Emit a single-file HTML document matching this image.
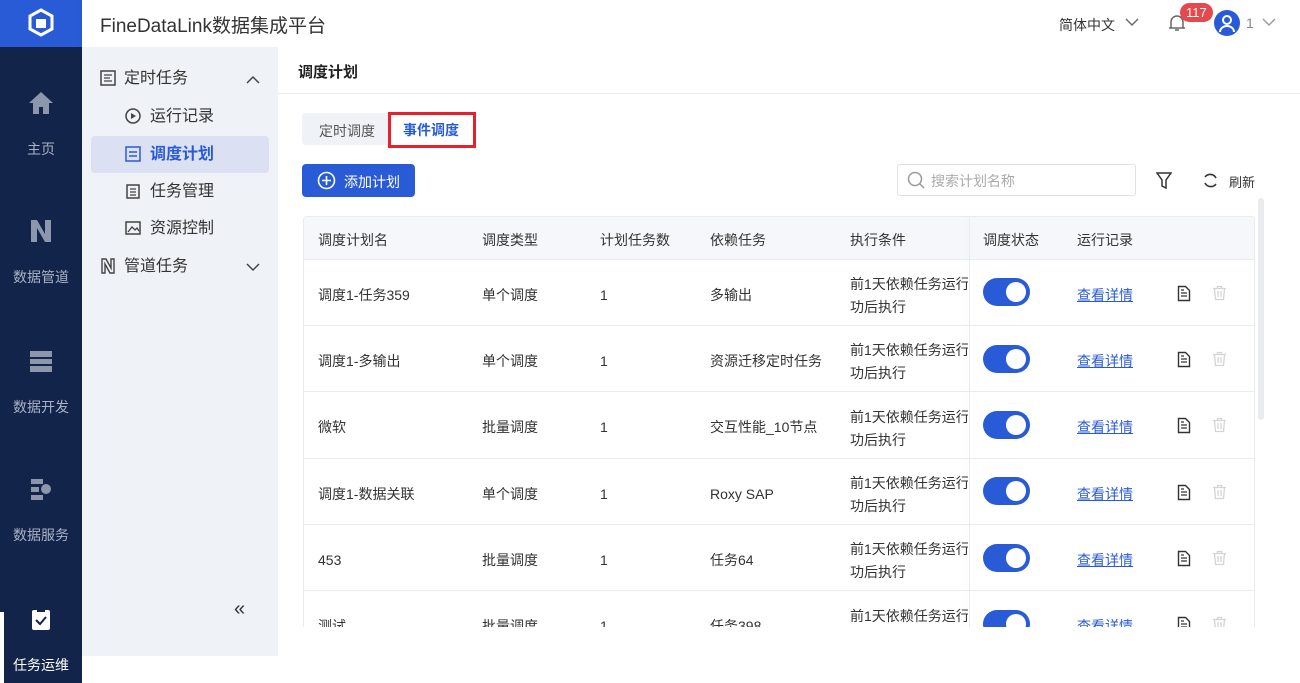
<!DOCTYPE html>
<html><head><meta charset="utf-8"><style>
*{margin:0;padding:0;box-sizing:border-box}
body{width:1300px;height:683px;overflow:hidden;background:#fff;font-family:"Liberation Sans","Noto Sans CJK SC",sans-serif;position:relative;color:#333}
.abs{position:absolute}
.side{left:0;top:0;width:82px;height:683px;background:#13244a}
.logo{left:0;top:0;width:82px;height:47px;background:#2a5bd7}
.nav{width:82px;text-align:center;color:#a9b2c4;font-size:14px}
.nav div{margin-top:20px}
.top{left:82px;top:0;width:1218px;height:47px;background:#fff;box-shadow:0 2px 6px rgba(0,0,0,.06)}
.menu{left:82px;top:47px;width:196px;height:609px;background:#eff2f7}
.mi{position:absolute;font-size:16px;color:#333;line-height:20px}
.mic{position:absolute}
.main{left:278px;top:47px;width:1022px;height:580px;background:#fff;overflow:hidden}
.tbl{position:absolute;left:25px;top:169px;width:952px;height:420px;border:1px solid #e8ebf0;border-radius:4px;overflow:hidden}
.th{position:absolute;top:0;left:0;width:952px;height:43px;background:#f5f7fa;border-bottom:1px solid #e8ebf0}
.c{position:absolute;font-size:14px;color:#333;white-space:nowrap;line-height:20px}
.row{position:absolute;left:0;width:952px;height:66px;border-bottom:1px solid #e8ebf0}
.tg{position:absolute;width:47px;height:28px;border-radius:14px;background:#2a5bd7}
.tg:after{content:"";position:absolute;right:4px;top:4px;width:20px;height:20px;border-radius:50%;background:#fff}
.lk{color:#2a5bd7;text-decoration:underline}
.b{position:absolute;top:2px;left:0;width:952px;height:411px}
</style></head><body>
<div class="abs side"></div>
<div class="abs logo"><svg width="82" height="47"><g transform="translate(41,23)" fill="#fff"><path d="M0-13 L11-7 L11 6 L0 12 L-11 6 L-11-7Z" fill="none" stroke="#fff" stroke-width="3"/><path d="M-5-4h10v9h-10z"/></g></svg></div>
<div class="abs nav" style="top:90px"><svg width="26" height="26" viewBox="0 0 26 26"><path d="M13 2 L25 13 H21 V24 H15 V17 H11 V24 H5 V13 H1Z" fill="#8d97ab"/></svg><div>主页</div></div>
<div class="abs nav" style="top:218px"><svg width="26" height="26"><path d="M3 2h6l8 14V2h6v22h-6L9 10v14H3z" fill="#8d97ab"/></svg><div>数据管道</div></div>
<div class="abs nav" style="top:348px"><svg width="26" height="26"><rect x="2" y="3" width="22" height="6" fill="#8d97ab"/><rect x="2" y="11" width="22" height="5" fill="#8d97ab"/><rect x="2" y="18" width="22" height="6" fill="#8d97ab"/></svg><div>数据开发</div></div>
<div class="abs nav" style="top:476px"><svg width="26" height="26"><rect x="3" y="3" width="12" height="5" fill="#8d97ab"/><rect x="3" y="11" width="8" height="5" fill="#8d97ab"/><rect x="3" y="19" width="12" height="5" fill="#8d97ab"/><circle cx="18" cy="13" r="5" fill="#8d97ab"/></svg><div>数据服务</div></div>
<div class="abs" style="left:0;top:612px;width:4px;height:71px;background:#fff"></div>
<div class="abs nav" style="top:606px;color:#fff"><svg width="26" height="26"><rect x="4" y="4" width="18" height="20" rx="2" fill="#fff"/><rect x="9" y="2" width="8" height="4" fill="#13244a"/><path d="M8 14l4 4 6-7" stroke="#13244a" stroke-width="2" fill="none"/></svg><div>任务运维</div></div>
<div class="abs top"><div class="abs" style="left:18px;top:11px;font-size:19px;color:#333">FineDataLink数据集成平台</div>
<div class="abs" style="left:977px;top:15px;font-size:14px;color:#333">简体中文</div>
<svg class="abs" style="left:1043px;top:17px" width="14" height="10"><path d="M1 2l6 6 6-6" stroke="#666" stroke-width="1.4" fill="none"/></svg>
<svg class="abs" style="left:1086px;top:13px" width="18" height="20"><path d="M3 15V9a6 6 0 0 1 12 0v6h2H1zM7 17h4" stroke="#666" stroke-width="1.5" fill="none"/></svg>
<div class="abs" style="left:1098px;top:3px;background:#e5484d;color:#fff;font-size:13px;border-radius:10px;padding:0 6px;height:19px;line-height:19px">117</div>
<div class="abs" style="left:1132px;top:10px;width:26px;height:26px;border-radius:50%;background:#2a5bd7"><svg width="26" height="26"><circle cx="13" cy="10" r="4" stroke="#fff" stroke-width="2" fill="none"/><path d="M6 22a7 6 0 0 1 14 0" stroke="#fff" stroke-width="2" fill="none"/></svg></div>
<div class="abs" style="left:1164px;top:15px;font-size:14px;color:#888">1</div>
<svg class="abs" style="left:1180px;top:17px" width="14" height="10"><path d="M1 2l6 6 6-6" stroke="#999" stroke-width="1.4" fill="none"/></svg></div>
<div class="abs menu">
<svg class="mic" style="left:18px;top:23px" width="16" height="16"><rect x="1" y="1" width="14" height="14" fill="none" stroke="#444" stroke-width="1.5"/><path d="M4 5h8M4 8h6M4 11h8" stroke="#444" stroke-width="1.3"/></svg>
<div class="mi" style="left:42px;top:22px">定时任务</div>
<svg class="mic" style="left:164px;top:28px" width="14" height="10"><path d="M1 8l6-6 6 6" stroke="#444" stroke-width="1.5" fill="none"/></svg>
<svg class="mic" style="left:43px;top:61px" width="16" height="16"><circle cx="8" cy="8" r="7" fill="none" stroke="#444" stroke-width="1.5"/><path d="M6 5l5 3-5 3z" fill="#444"/></svg>
<div class="mi" style="left:68px;top:60px">运行记录</div>
<div class="abs" style="left:9px;top:89px;width:178px;height:37px;background:#dbe1f3;border-radius:4px"></div>
<svg class="mic" style="left:43px;top:99px" width="16" height="16"><rect x="1" y="1" width="14" height="14" fill="none" stroke="#2a5bd7" stroke-width="1.5"/><path d="M4 6h8M4 10h8" stroke="#2a5bd7" stroke-width="1.5"/></svg>
<div class="mi" style="left:68px;top:98px;color:#2a5bd7;font-weight:bold">调度计划</div>
<svg class="mic" style="left:43px;top:136px" width="16" height="16"><rect x="2" y="2" width="12" height="13" fill="none" stroke="#444" stroke-width="1.5"/><path d="M5 6h6M5 9h6M5 12h6" stroke="#444" stroke-width="1.3"/></svg>
<div class="mi" style="left:68px;top:135px">任务管理</div>
<svg class="mic" style="left:43px;top:173px" width="16" height="16"><rect x="1" y="2" width="14" height="12" fill="none" stroke="#444" stroke-width="1.5"/><path d="M3 12l4-5 3 3 2-2 2 3" stroke="#444" stroke-width="1.3" fill="none"/></svg>
<div class="mi" style="left:68px;top:172px">资源控制</div>
<svg class="mic" style="left:18px;top:211px" width="16" height="16"><path d="M2 1h4l5 9V1h3v14h-4L5 6v9H2z" fill="none" stroke="#444" stroke-width="1.4"/></svg>
<div class="mi" style="left:42px;top:210px">管道任务</div>
<svg class="mic" style="left:164px;top:215px" width="14" height="10"><path d="M1 2l6 6 6-6" stroke="#444" stroke-width="1.5" fill="none"/></svg>
<div class="mi" style="left:152px;top:552px;font-size:20px">«</div>
</div>
<div class="abs main">
<div class="abs" style="left:20px;top:14px;font-size:15px;font-weight:bold;color:#222">调度计划</div>
<div class="abs" style="left:0;top:46px;width:1022px;height:1px;background:#e8ebf0"></div>
<div class="abs" style="left:24px;top:66px;width:162px;height:32px;background:#eff2f7;border-radius:4px"></div>
<div class="abs" style="left:41px;top:74px;font-size:14px;color:#555">定时调度</div>
<div class="abs" style="left:110px;top:65px;width:88px;height:36px;border:3px solid #e8202a;background:#fff"></div>
<div class="abs" style="left:125px;top:73px;font-size:14px;color:#2a5bd7;font-weight:bold">事件调度</div>
<div class="abs" style="left:24px;top:117px;width:113px;height:33px;background:#2a5bd7;border-radius:4px"></div>
<svg class="abs" style="left:39px;top:124px" width="19" height="19"><circle cx="9.5" cy="9.5" r="8" fill="none" stroke="#fff" stroke-width="1.6"/><path d="M9.5 5v9M5 9.5h9" stroke="#fff" stroke-width="1.6"/></svg>
<div class="abs" style="left:66px;top:125px;color:#fff;font-size:14px">添加计划</div>
<div class="abs" style="left:619px;top:117px;width:239px;height:32px;border:1px solid #dde1e8;border-radius:3px"></div>
<svg class="abs" style="left:629px;top:124px" width="19" height="19"><circle cx="8" cy="8" r="6.5" fill="none" stroke="#999" stroke-width="1.5"/><path d="M13 13l4 4" stroke="#999" stroke-width="1.5"/></svg>
<div class="abs" style="left:653px;top:124px;font-size:14px;color:#aaa">搜索计划名称</div>
<svg class="abs" style="left:878px;top:125px" width="16" height="17"><path d="M1 1h14l-5 7v8l-4-2V8z" fill="none" stroke="#333" stroke-width="1.5"/></svg>
<svg class="abs" style="left:924px;top:125px" width="17" height="17"><path d="M14 6A6.5 6.5 0 0 0 3 5M3 11a6.5 6.5 0 0 0 11 1" fill="none" stroke="#333" stroke-width="1.6"/></svg>
<div class="abs" style="left:951px;top:125px;font-size:13px;color:#333">刷新</div>
<div class="abs" style="left:980px;top:151px;width:6px;height:222px;background:#e9ebef;border-radius:3px"></div>
<div class="tbl">
<div class="th">
<div class="c" style="left:14px;top:13px">调度计划名</div><div class="c" style="left:178px;top:13px">调度类型</div><div class="c" style="left:296px;top:13px">计划任务数</div><div class="c" style="left:406px;top:13px">依赖任务</div><div class="c" style="left:546px;top:13px">执行条件</div><div class="c" style="left:679px;top:13px">调度状态</div><div class="c" style="left:773px;top:13px">运行记录</div></div>
<div class="row" style="top:43px"></div><div class="row" style="top:109px"></div><div class="row" style="top:176px"></div><div class="row" style="top:242px"></div><div class="row" style="top:308px"></div><div class="row" style="top:375px"></div>
<div class="abs" style="left:665px;top:0;width:1px;height:420px;background:#e8ebf0;box-shadow:-3px 0 6px rgba(0,0,0,.06)"></div>
</div>
</div>
<svg width="0" height="0" style="position:absolute"><defs>
<g id="doc"><path d="M1.5 1.5h7l4 4v10h-11z" fill="none" stroke="#333" stroke-width="1.4"/><path d="M4 8h6M4 11h6M4 5h3" stroke="#333" stroke-width="1.2"/></g>
<g id="tr"><path d="M1 3.5h13M5.5 3.5V1.5h4v2M2.5 3.5l1 11h8l1-11M6 6v6M9 6v6" fill="none" stroke="#d4d4d4" stroke-width="1.3"/></g>
</defs></svg>
<div class="abs" style="left:303px;top:216px;width:952px;height:411px;overflow:hidden">
<div class="b">
<div class="c" style="left:15px;top:67px">调度1-任务359</div><div class="c" style="left:179px;top:67px">单个调度</div><div class="c" style="left:297px;top:67px">1</div><div class="c" style="left:407px;top:67px">多输出</div><div class="c" style="left:547px;top:55px;line-height:23px;width:118px;overflow:hidden">前1天依赖任务运行<br>功后执行</div><div class="tg" style="left:680px;top:60px"></div><div class="c lk" style="left:774px;top:67px">查看详情</div><svg class="abs" style="left:874px;top:67px" width="15" height="17"><use href="#doc"/></svg><svg class="abs" style="left:909px;top:67px" width="15" height="17"><use href="#tr"/></svg>
<div class="c" style="left:15px;top:133px">调度1-多输出</div><div class="c" style="left:179px;top:133px">单个调度</div><div class="c" style="left:297px;top:133px">1</div><div class="c" style="left:407px;top:133px">资源迁移定时任务</div><div class="c" style="left:547px;top:121px;line-height:23px;width:118px;overflow:hidden">前1天依赖任务运行<br>功后执行</div><div class="tg" style="left:680px;top:127px"></div><div class="c lk" style="left:774px;top:133px">查看详情</div><svg class="abs" style="left:874px;top:133px" width="15" height="17"><use href="#doc"/></svg><svg class="abs" style="left:909px;top:133px" width="15" height="17"><use href="#tr"/></svg>
<div class="c" style="left:15px;top:199px">微软</div><div class="c" style="left:179px;top:199px">批量调度</div><div class="c" style="left:297px;top:199px">1</div><div class="c" style="left:407px;top:199px">交互性能_10节点</div><div class="c" style="left:547px;top:188px;line-height:23px;width:118px;overflow:hidden">前1天依赖任务运行<br>功后执行</div><div class="tg" style="left:680px;top:193px"></div><div class="c lk" style="left:774px;top:199px">查看详情</div><svg class="abs" style="left:874px;top:199px" width="15" height="17"><use href="#doc"/></svg><svg class="abs" style="left:909px;top:199px" width="15" height="17"><use href="#tr"/></svg>
<div class="c" style="left:15px;top:266px">调度1-数据关联</div><div class="c" style="left:179px;top:266px">单个调度</div><div class="c" style="left:297px;top:266px">1</div><div class="c" style="left:407px;top:266px">Roxy SAP</div><div class="c" style="left:547px;top:254px;line-height:23px;width:118px;overflow:hidden">前1天依赖任务运行<br>功后执行</div><div class="tg" style="left:680px;top:259px"></div><div class="c lk" style="left:774px;top:266px">查看详情</div><svg class="abs" style="left:874px;top:266px" width="15" height="17"><use href="#doc"/></svg><svg class="abs" style="left:909px;top:266px" width="15" height="17"><use href="#tr"/></svg>
<div class="c" style="left:15px;top:332px">453</div><div class="c" style="left:179px;top:332px">批量调度</div><div class="c" style="left:297px;top:332px">1</div><div class="c" style="left:407px;top:332px">任务64</div><div class="c" style="left:547px;top:320px;line-height:23px;width:118px;overflow:hidden">前1天依赖任务运行<br>功后执行</div><div class="tg" style="left:680px;top:326px"></div><div class="c lk" style="left:774px;top:332px">查看详情</div><svg class="abs" style="left:874px;top:332px" width="15" height="17"><use href="#doc"/></svg><svg class="abs" style="left:909px;top:332px" width="15" height="17"><use href="#tr"/></svg>
<div class="c" style="left:15px;top:398px">测试</div><div class="c" style="left:179px;top:398px">批量调度</div><div class="c" style="left:297px;top:398px">1</div><div class="c" style="left:407px;top:398px">任务398</div><div class="c" style="left:547px;top:387px;line-height:23px;width:118px;overflow:hidden">前1天依赖任务运行</div><div class="tg" style="left:680px;top:392px"></div><div class="c lk" style="left:774px;top:398px">查看详情</div><svg class="abs" style="left:874px;top:398px" width="15" height="17"><use href="#doc"/></svg><svg class="abs" style="left:909px;top:398px" width="15" height="17"><use href="#tr"/></svg>
</div></div>
</body></html>
